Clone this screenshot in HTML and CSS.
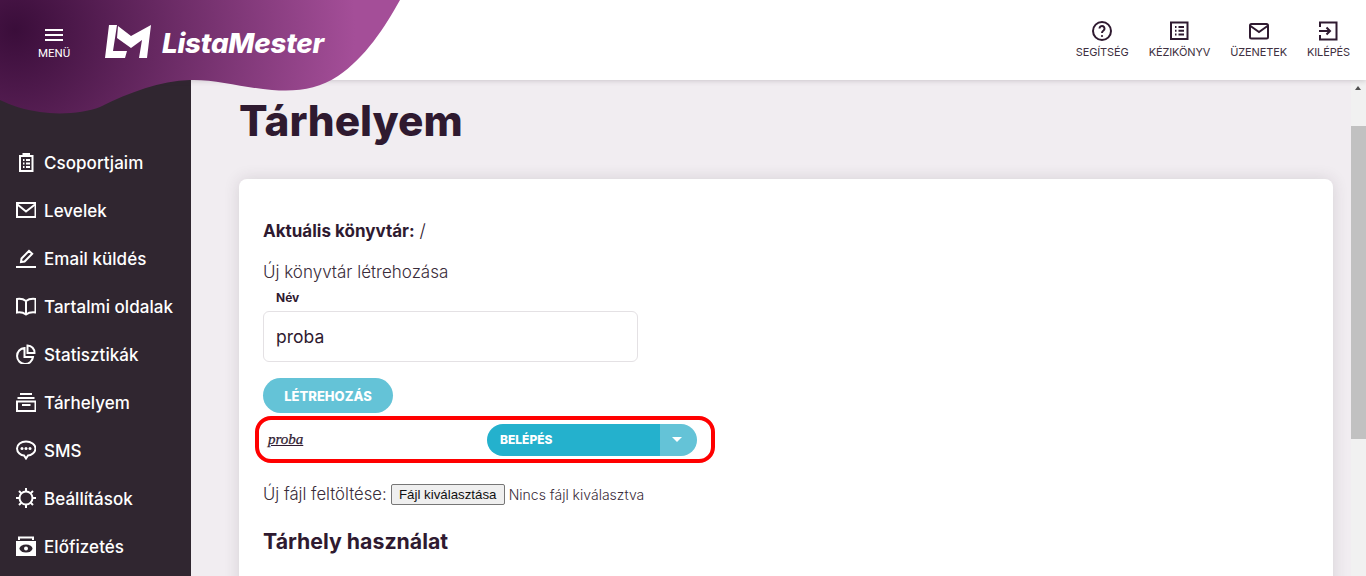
FILE: index.html
```html
<!DOCTYPE html>
<html lang="hu">
<head>
<meta charset="utf-8">
<title>Tárhelyem</title>
<link rel="stylesheet" href="styles.css">
</head>
<body>
<header class="topbar">
  <svg class="swoosh" width="400" height="115" viewBox="0 0 400 115" aria-hidden="true">
    <defs>
      <radialGradient id="sw" gradientUnits="userSpaceOnUse" cx="15" cy="30" r="340">
        <stop offset="0" stop-color="#3a0d3a"/>
        <stop offset="1" stop-color="#a44e98"/>
      </radialGradient>
    </defs>
    <path fill="url(#sw)" d="M0 0H400C385 27 365 58 338 76C318 89 298 92 272 90C245 88 215 79 190 80C160 81 130 92 100 107C85 113 60 115 40 112C25 110 10 105 0 100Z"/>
  </svg>
  <div class="brand">
    <button class="menu-btn">
      <span class="burger"><i></i><i></i><i></i></span>
      <span class="menu-label">MENÜ</span>
    </button>
    <svg class="logo-mark" width="47" height="34" viewBox="0 0 47 34" aria-hidden="true">
      <path fill="#fff" d="M4 0H12L8 26H22L20 33H0Z"/>
      <path fill="#fff" d="M13 1L26 11L46 0L42 33H34L37 15L26 23L12 13Z"/>
    </svg>
    <span class="logo-text">ListaMester</span>
  </div>
  <nav class="top-nav">
    <a class="top-item"><svg width="24" height="24" viewBox="0 0 24 24"><circle cx="12" cy="12" r="9" class="st"/><path class="st" d="M9.500 9.500a2.500 2.500 0 1 1 4 2c-1 .7-1.500 1.200-1.500 2.500"/><circle cx="12" cy="17" r="1.100" fill="#2f1a30"/></svg><span>SEGÍTSÉG</span></a>
    <a class="top-item"><svg width="24" height="24" viewBox="0 0 24 24"><rect x="4" y="3.500" width="16.500" height="16.500" class="st"/><path class="st" d="M8 8h1.500M11.500 8H17M8 11.800h1.500M11.500 11.800H17M8 15.500h1.500M11.500 15.500H17"/></svg><span>KÉZIKÖNYV</span></a>
    <a class="top-item"><svg width="24" height="24" viewBox="0 0 24 24"><rect x="3" y="5" width="18" height="14.500" rx="1.500" class="st"/><path class="st" d="M3.500 7l8.500 6 8.500-6"/></svg><span>ÜZENETEK</span></a>
    <a class="top-item"><svg width="24" height="24" viewBox="0 0 24 24"><path class="st" d="M4 8V3.500H20.500V20.500H4V16M3 12H14M10.500 8.500L14 12L10.500 15.500"/></svg><span>KILÉPÉS</span></a>
  </nav>
</header>
<div class="shell">
  <aside class="sidebar">
    <a class="side-item"><svg width="20" height="20" viewBox="0 0 20 20"><path class="sw" d="M4 4h12.500v15H4zM7.500 4V2h5.500v2"/><path class="sw" d="M7 8h1.500M10 8h4M7 11.500h1.500M10 11.500h4M7 15h1.500M10 15h4"/></svg><span>Csoportjaim</span></a>
    <a class="side-item"><svg width="20" height="20" viewBox="0 0 20 20"><rect x="1" y="3" width="18.500" height="14" class="sw"/><path class="sw" d="M1.500 4.500L10 11.500L19 4.500"/></svg><span>Levelek</span></a>
    <a class="side-item"><svg width="20" height="20" viewBox="0 0 20 20"><path class="sw" d="M5 14l.5-3.500L13 2.800l3.200 3L8.600 13.500z"/><path class="sw" d="M0 19h20"/></svg><span>Email küldés</span></a>
    <a class="side-item"><svg width="20" height="20" viewBox="0 0 20 20"><path class="sw" d="M10 5C8 3.500 4 2.500 1 3V16.500C4 16 8 17 10 18.500C12 17 16 16 19.500 16.500V3C16 2.500 12 3.500 10 5V18.500"/></svg><span>Tartalmi oldalak</span></a>
    <a class="side-item"><svg width="20" height="20" viewBox="0 0 20 20"><path class="sw" d="M8.500 4A8 8 0 1 0 17 13H8.500z"/><path class="sw" d="M11.500 1.500A7 7 0 0 1 18.500 9H11.500z"/></svg><span>Statisztikák</span></a>
    <a class="side-item"><svg width="20" height="20" viewBox="0 0 20 20"><path class="sw" d="M4 2h12M1.500 6h17M1 9.500h18.500V19H1zM6 13h8.500"/></svg><span>Tárhelyem</span></a>
    <a class="side-item"><svg width="20" height="20" viewBox="0 0 20 20"><path class="sw" d="M10 1.500C5 1.500 1 4.500 1 8.500s4 7 7 7L10 18.500l2-3c3 0 7.500-3 7.500-7S15 1.500 10 1.500z"/><circle cx="6" cy="8.500" r="1.500" fill="#fff"/><circle cx="10" cy="8.500" r="1.500" fill="#fff"/><circle cx="14" cy="8.500" r="1.500" fill="#fff"/></svg><span>SMS</span></a>
    <a class="side-item"><svg width="20" height="20" viewBox="0 0 20 20"><circle cx="10" cy="10" r="6.500" class="sw"/><path class="sw" d="M10 0v3.500M10 16.500V20M0 10h3.500M16.500 10H20M3 3l2.300 2.300M14.700 14.700L17 17M17 3l-2.300 2.300M5.300 14.700L3 17"/></svg><span>Beállítások</span></a>
    <a class="side-item"><svg width="20" height="20" viewBox="0 0 20 20"><path class="sw" d="M3 4V1.500H17V4"/><rect x="0" y="5" width="20" height="15" fill="#fff"/><ellipse cx="10" cy="12.500" rx="6.500" ry="4" fill="#302630"/><circle cx="10" cy="12.500" r="2" fill="#fff"/></svg><span>Előfizetés</span></a>
  </aside>
  <main class="content">
    <h1 class="page-title">Tárhelyem</h1>
    <section class="card">
      <p class="current"><strong>Aktuális könyvtár:</strong> <span class="slash">/</span></p>
      <p class="new-dir">Új könyvtár létrehozása</p>
      <label class="field-label" for="nev">Név</label>
      <input class="field" id="nev" type="text" value="proba">
      <button class="create-btn">LÉTREHOZÁS</button>
      <div class="dir-row">
        <a class="dir-link">proba</a>
        <div class="split">
          <button class="split-main">BELÉPÉS</button>
          <button class="split-caret" aria-label="Több"><i></i></button>
        </div>
      </div>
      <div class="upload">
        <span>Új fájl feltöltése:</span>
        <span class="file-btn">Fájl kiválasztása</span>
        <span class="file-none">Nincs fájl kiválasztva</span>
      </div>
      <h2 class="usage">Tárhely használat</h2>
    </section>
  </main>
  <div class="scrollbar">
    <div class="sb-arrow"></div>
    <div class="sb-gap"></div>
    <div class="sb-thumb"></div>
  </div>
</div>
</body>
</html>
```
FILE: styles.css
```css
* { box-sizing: border-box; }
html, body { margin: 0; height: 100%; overflow: hidden; }
body {
  font-family: "Inter", "Open Sans", sans-serif;
  color: #2f1a30;
  background: #f1edf1;
  display: flex;
  flex-direction: column;
}
.topbar {
  position: relative;
  height: 80px;
  flex: none;
  background: #fff;
  display: flex;
  justify-content: space-between;
  align-items: center;
  box-shadow: 0 1px 5px rgba(60, 40, 60, .2);
  z-index: 2;
}
.swoosh { position: absolute; left: 0; top: 0; }
.brand { position: relative; display: flex; align-items: center; padding-left: 38px; height: 80px; }
.menu-btn {
  all: unset;
  display: flex;
  flex-direction: column;
  align-items: center;
  width: 32px;
  margin-top: 8px;
}
.burger { display: flex; flex-direction: column; gap: 3px; width: 18px; }
.burger i { display: block; height: 2px; background: #fff; }
.menu-label { font: 400 11.500px/12px "Roboto", sans-serif; color: #fff; margin-top: 6px; }
.logo-mark { margin-left: 35px; margin-top: 3px; }
.logo-text {
  font: italic 800 27.700px/1 "Inter", sans-serif;
  color: #fff;
  margin-left: 10px;
  margin-top: 7px;
  letter-spacing: -.2px;
}
.top-nav { display: flex; gap: 20px; padding-right: 16px; position: relative; }
.top-item { display: flex; flex-direction: column; align-items: center; gap: 2px; padding-bottom: 2px; }
.top-item span { font-size: 11px; line-height: 14px; color: #403040; letter-spacing: -.12px; }
.st { fill: none; stroke: #2f1a30; stroke-width: 2; }
.sw { fill: none; stroke: #fff; stroke-width: 2; }

.shell { flex: 1; display: flex; min-height: 0; }
.sidebar {
  width: 191px;
  flex: none;
  background: #302630;
  padding-top: 58px;
  display: flex;
  flex-direction: column;
}
.side-item { display: flex; align-items: center; height: 48px; padding-left: 16px; gap: 8px; flex: none; }
.side-item svg { flex: none; }
.side-item span { color: #fff; font-size: 17px; font-weight: 500; letter-spacing: .05px; padding-top: 1px; }

.content { flex: 1; min-width: 0; padding: 16px 18px 0 48px; overflow: hidden; }
.page-title { margin: 0 0 33px; font-size: 42.300px; line-height: 50px; font-weight: 800; color: #2f1a30; }
.card {
  background: #fff;
  border-radius: 8px;
  box-shadow: 0 0 16px rgba(60, 40, 60, .14);
  padding: 38px 24px 40px;
  height: 500px;
}
.current { margin: 0; font-size: 17px; line-height: 28px; }
.current strong { font-weight: 700; }
.slash { font-size: 18px; font-weight: 300; }
.new-dir { margin: 13px 0 0; font-size: 17px; line-height: 28px; color: #3a2c3a; font-weight: 300; }
.field-label { display: block; margin: 4px 0 0 13px; font-size: 12px; line-height: 16px; font-weight: 700; }
.field {
  display: block;
  width: 375px;
  height: 51px;
  margin-top: 5px;
  padding: 0 12px;
  border: 1px solid #e4e1e4;
  border-radius: 6px;
  font: 400 17.500px "Inter", sans-serif;
  color: #2f1a30;
}
.create-btn {
  display: block;
  width: 130px;
  height: 35px;
  margin-top: 16px;
  border: 0;
  border-radius: 18px;
  background: #64c3d7;
  color: #fff;
  font: 800 13px "Inter", sans-serif;
}
.dir-row {
  display: flex;
  align-items: center;
  justify-content: space-between;
  width: 460px;
  height: 47px;
  margin: 3px 0 0 -8px;
  padding: 0 14px 0 12px;
  border: 4px solid #f00;
  border-radius: 16px;
}
.dir-link {
  font: italic 400 15px "Liberation Serif", serif;
  -webkit-text-stroke: .25px #2f1a30;
  color: #2f1a30;
  text-decoration: underline;
  margin-left: -3px;
}
.split { display: flex; width: 210px; height: 32px; border-radius: 16px; overflow: hidden; }
.split-main {
  flex: 1;
  border: 0;
  background: #24b1cd;
  color: #fff;
  text-align: left;
  padding: 0 0 0 13px;
  font: 800 12px "Inter", sans-serif;
}
.split-caret {
  width: 37px;
  border: 0;
  background: #64c3d7;
  display: flex;
  align-items: center;
  justify-content: center;
  padding: 0 4px 0 0;
}
.split-caret i { display: block; border: 5px solid transparent; border-top-color: #fff; border-bottom: 0; }
.upload { display: flex; align-items: center; margin-top: 20px; height: 22px; font-size: 16.700px; font-weight: 300; color: #3a2c3a; }
.file-btn {
  margin-left: 4px;
  height: 21px;
  width: 114px;
  border: 1px solid #767676;
  border-radius: 2px;
  background: #efefef;
  color: #111;
  font: 400 13.300px/19px "Liberation Sans", sans-serif;
  text-align: center;
}
.file-none { margin-left: 4px; font-size: 14px; }
.usage { margin: 22px 0 0; font-size: 21.300px; line-height: 28px; font-weight: 700; }

.scrollbar { width: 15px; flex: none; background: #f1f1f1; display: flex; flex-direction: column; }
.sb-arrow { height: 17px; position: relative; flex: none; }
.sb-arrow::after {
  content: "";
  position: absolute;
  left: 4px;
  top: 6px;
  border: 3.500px solid transparent;
  border-bottom: 4px solid #505050;
  border-top: 0;
}
.sb-gap { height: 29px; flex: none; }
.sb-thumb { flex: none; height: 313px; background: #c1c1c1; }
```
